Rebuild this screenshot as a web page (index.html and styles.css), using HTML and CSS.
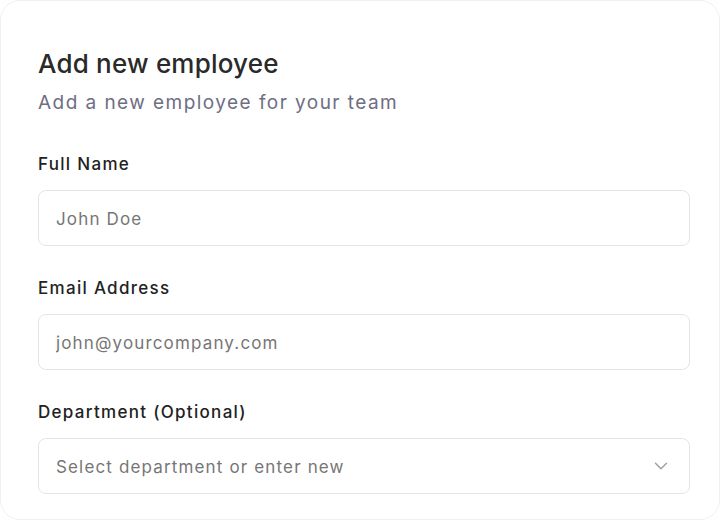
FILE: index.html
```html
<!DOCTYPE html>
<html lang="en">
<head>
    <meta charset="UTF-8">
    <meta name="viewport" content="width=device-width, initial-scale=1.0">
    <title>Add new employee</title>
    <link rel="stylesheet" href="styles.css">
</head>
<body>
    <div class="card">
        <h1>Add new employee</h1>
        <p class="subtitle">Add a new employee for your team</p>

        <!-- Formulario de empleado -->
        <form class="form">
            <div class="field">
                <label for="full-name">Full Name</label>
                <input type="text" id="full-name" placeholder="John Doe">
            </div>
            <div class="field">
                <label for="email">Email Address</label>
                <input type="email" id="email" placeholder="john@yourcompany.com">
            </div>
            <div class="field">
                <label for="department">Department (Optional)</label>
                <div class="select">
                    <input type="text" id="department" placeholder="Select department or enter new">
                    <svg class="chevron" width="22" height="22" viewBox="0 0 24 24" fill="none" stroke="currentColor" stroke-width="1.6" stroke-linecap="round" stroke-linejoin="round"><path d="M6 9l6 6 6-6"/></svg>
                </div>
            </div>
        </form>
    </div>
</body>
</html>
```

FILE: styles.css
```css
* { box-sizing: border-box; }
body { margin: 0; background: #fff; font-family: Inter, "Noto Sans", Arial, sans-serif; }
.card { width: 720px; height: 520px; border: 1px solid #f0f0f0; border-radius: 20px; padding: 47px 29px 0 37px; background: #fff; overflow: hidden; }
h1 { margin: 0; font-size: 26px; line-height: 32px; font-weight: 500; color: #2a2a2a; letter-spacing: 0.2px; }
.subtitle { margin: 11px 0 0; font-size: 19px; line-height: 24px; color: #6e6e82; letter-spacing: 1.45px; }
.form { margin-top: 35px; display: flex; flex-direction: column; gap: 28px; }
.field { display: flex; flex-direction: column; gap: 14px; }
label { padding-top: 2px; font-size: 17px; line-height: 24px; font-weight: 500; color: #222; letter-spacing: 1.3px; }
input { width: 100%; height: 56px; padding: 2px 17px 0; border: 1px solid #e4e4e4; border-radius: 8px; font-family: inherit; font-size: 17px; letter-spacing: 1.15px; color: #222; background: #fff; outline: none; }
input::placeholder { color: #767676; }
.select { position: relative; }
.select input { padding-right: 44px; }
.chevron { position: absolute; right: 18px; top: 17px; color: #a0a0a0; }
```
